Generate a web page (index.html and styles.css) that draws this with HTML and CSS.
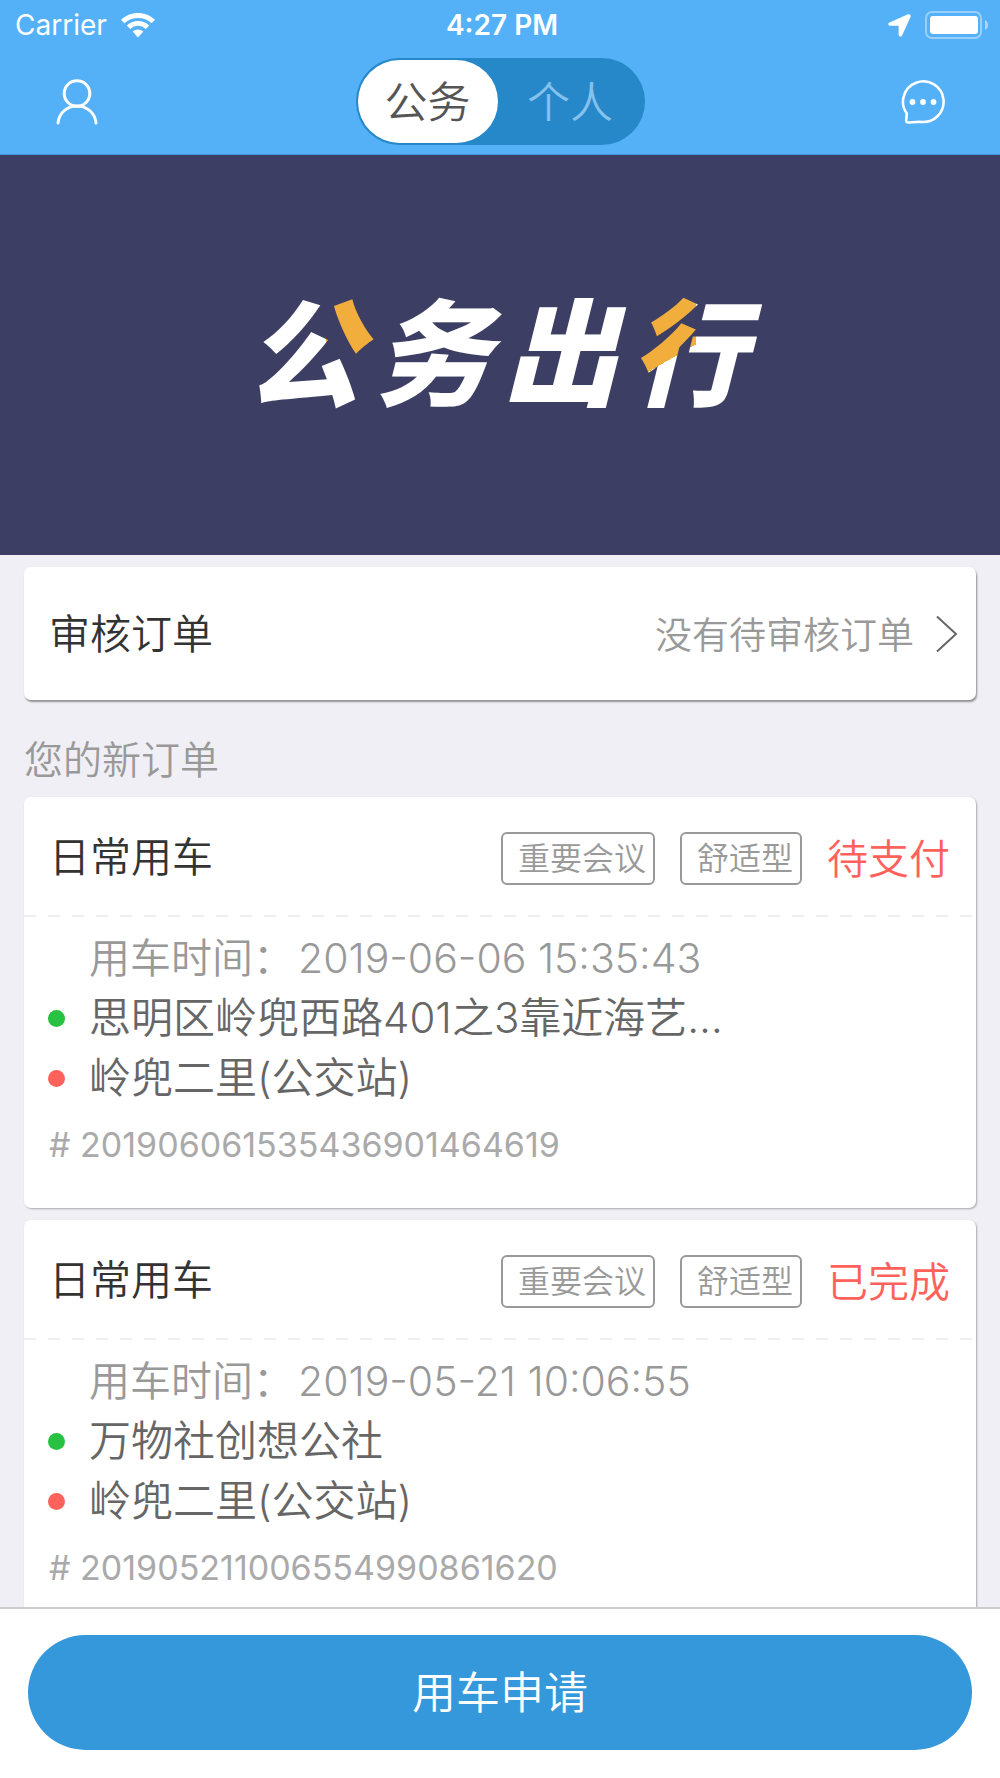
FILE: index.html
```html
<!DOCTYPE html>
<html lang="zh-CN">
<head>
    <meta charset="UTF-8">
    <meta name="viewport" content="width=device-width, initial-scale=1.0">
    <title>公务出行</title>
    <link rel="stylesheet" href="styles.css">
</head>
<body>
    <header class="header">
        <div class="status-bar">
            <div class="carrier">
                <span>Carrier</span>
                <svg width="34" height="25" viewBox="0 0 34 25" fill="#fff">
                    <path d="M17 0C10.500 0 4.600 2.500 0 6.700L3.400 10.300A20 20 0 0 1 30.600 10.300L34 6.700C29.400 2.500 23.500 0 17 0Z"/>
                    <path d="M17 8C12.700 8 8.800 9.600 5.800 12.400L9.200 15.900A11.500 11.500 0 0 1 24.800 15.900L28.200 12.400C25.200 9.600 21.300 8 17 8Z"/>
                    <path d="M17 16.500C15 16.500 13.200 17.200 11.700 18.500L17 24.500L22.300 18.500C20.800 17.200 19 16.500 17 16.500Z"/>
                </svg>
            </div>
            <strong class="time">4:27 PM</strong>
            <div class="battery">
                <svg width="23" height="23" viewBox="0 0 23 23" fill="#fff">
                    <path d="M20 .300L1.500 8.400C-.300 9.300 0 11.700 1.800 11.700H10.600V20.700C10.600 22.800 13.300 23.200 14.200 21.300L22.500 2.900C23.200 1.200 21.800-.400 20 .300Z"/>
                </svg>
                <svg width="64" height="28" viewBox="0 0 64 28">
                    <rect x="1" y="1" width="55" height="26" rx="6" fill="none" stroke="#fff" stroke-opacity=".4" stroke-width="2"/>
                    <rect x="5" y="5" width="48" height="18" rx="3" fill="#fff"/>
                    <path d="M60 9C62.200 10 63 12 63 14C63 16 62.200 18 60 19Z" fill="#fff" fill-opacity=".5"/>
                </svg>
            </div>
        </div>
        <nav class="nav">
            <button type="button" class="icon-btn" aria-label="个人中心">
                <svg width="44" height="46" viewBox="0 0 44 46" fill="none" stroke="#fff" stroke-width="3" stroke-linecap="round">
                    <circle cx="22" cy="14.500" r="12.800"/>
                    <path d="M3 44C4 34 12 27 22 27S40 34 41 44"/>
                </svg>
            </button>
            <div class="segment">
                <button type="button" class="segment-item active">公务</button>
                <button type="button" class="segment-item">个人</button>
            </div>
            <button type="button" class="icon-btn" aria-label="消息">
                <svg width="44" height="46" viewBox="0 0 44 46">
                    <path d="M5.800 34.500A20.300 20.300 0 1 1 19 42.700L7.500 43.500Q5 43.500 5.200 41Z" fill="none" stroke="#fff" stroke-width="2.600" stroke-linejoin="round"/>
                    <g fill="#fff">
                        <circle cx="11.500" cy="23" r="2.900"/>
                        <circle cx="22" cy="23" r="2.900"/>
                        <circle cx="32.500" cy="23" r="2.900"/>
                    </g>
                </svg>
            </button>
        </nav>
    </header>

    <main class="content">
        <h1 class="banner">
            <span class="gold-right">公</span><span>务</span><span>出</span><span class="gold-left">行</span>
        </h1>

        <a href="#" class="card review">
            <span class="card-title">审核订单</span>
            <span class="review-text">没有待审核订单</span>
            <svg width="22" height="38" viewBox="0 0 22 38" fill="none" stroke="#666" stroke-width="2">
                <path d="M1 1.500L20 19L1 36.500"/>
            </svg>
        </a>

        <h2 class="list-title">您的新订单</h2>

        <article class="card order">
            <div class="order-head">
                <h3 class="card-title">日常用车</h3>
                <span class="tag">重要会议</span>
                <span class="tag">舒适型</span>
                <span class="state">待支付</span>
            </div>
            <div class="order-body">
                <p class="row use-time"><span>用车时间：</span><time>2019-06-06 15:35:43</time></p>
                <p class="row from">思明区岭兜西路401之3靠近海艺…</p>
                <p class="row to">岭兜二里(公交站)</p>
                <p class="order-no"># 201906061535436901464619</p>
            </div>
        </article>

        <article class="card order">
            <div class="order-head">
                <h3 class="card-title">日常用车</h3>
                <span class="tag">重要会议</span>
                <span class="tag">舒适型</span>
                <span class="state">已完成</span>
            </div>
            <div class="order-body">
                <p class="row use-time"><span>用车时间：</span><time>2019-05-21 10:06:55</time></p>
                <p class="row from">万物社创想公社</p>
                <p class="row to">岭兜二里(公交站)</p>
                <p class="order-no"># 201905211006554990861620</p>
            </div>
        </article>
    </main>

    <footer class="footer">
        <button type="button" class="apply">用车申请</button>
    </footer>
</body>
</html>
```

FILE: styles.css
```css
* {
    box-sizing: border-box;
    margin: 0;
    padding: 0;
}
body {
    display: flex;
    flex-direction: column;
    height: 100vh;
    background: #f0eff5;
    color: #333;
    font-family: Inter, "Noto Sans CJK SC", sans-serif;
    font-weight: 350;
}
button {
    border: none;
    background: none;
    font: inherit;
    cursor: pointer;
}
svg {
    display: block;
}

/* header */
.header {
    flex: none;
    background: #54b1f8;
    border-bottom: 1px solid #4596d6;
    color: #fff;
}
.status-bar {
    display: grid;
    grid-template-columns: 1fr auto 1fr;
    align-items: center;
    height: 50px;
    padding: 0 11px 0 15px;
    font-size: 28px;
    font-weight: 400;
}
.carrier,
.battery {
    display: flex;
    align-items: center;
    gap: 14px;
}
.battery {
    justify-content: flex-end;
}
.time {
    font-weight: 600;
}
.nav {
    display: flex;
    justify-content: space-between;
    align-items: center;
    height: 104px;
    padding: 0 55px 1px;
}
.segment {
    display: grid;
    grid-template-columns: 140px 145px;
    height: 87px;
    padding: 2px;
    border-radius: 44px;
    background: #2687c9;
}
.segment-item {
    padding-bottom: 5px;
    border-radius: 42px;
    font-size: 43px;
    color: #84c1ec;
}
.segment-item.active {
    background: #fff;
    color: #555;
}

/* content */
.content {
    flex: 1;
    min-height: 0;
    overflow-y: auto;
    scrollbar-width: none;
}
.banner {
    display: flex;
    justify-content: center;
    align-items: center;
    gap: 12px;
    height: 400px;
    padding-right: 8px;
    background: #3d3e63;
    color: #fff;
    font-size: 116px;
    font-style: italic;
    font-weight: 900;
    line-height: 160px;
}
/* two-tone characters, the padding leaves room for the slant */
.gold-right,
.gold-left {
    margin-right: -16px;
    padding-right: 16px;
    background-color: #fff;
    background-repeat: no-repeat;
    -webkit-background-clip: text;
    background-clip: text;
    color: transparent;
}
.gold-right {
    background-image: linear-gradient(#f1ae3d, #f1ae3d);
    background-position: right top;
    background-size: 52px 84px;
}
.gold-left {
    background-image: linear-gradient(150deg, #f1ae3d 93px, #fff 93px);
    background-size: 66px 160px;
}
.card {
    margin: 12px 24px 0;
    border-radius: 7px;
    background: #fff;
    box-shadow: 1px 1px 2px rgba(0, 0, 0, 0.3);
}
.card-title {
    flex: 1;
    padding-bottom: 5px;
    color: #333;
    font-size: 41px;
    font-weight: 350;
}
.review {
    display: flex;
    align-items: center;
    height: 133px;
    padding: 0 18px 0 25px;
    box-shadow: 1px 2px 2px rgba(0, 0, 0, 0.4);
    text-decoration: none;
}
.review-text {
    margin-right: 22px;
    padding-bottom: 2px;
    color: #999;
    font-size: 37px;
}
.list-title {
    margin: 30px 24px 0;
    color: #999;
    font-size: 39px;
    font-weight: 350;
    line-height: 60px;
}
.list-title + .card {
    margin-top: 7px;
}

/* order */
.order-head {
    display: flex;
    align-items: center;
    height: 120px;
    padding: 3px 26px 0 25px;
    background: repeating-linear-gradient(90deg, #eee 0 12px, transparent 12px 24px) bottom / 100% 2px no-repeat;
}
.order-head .card-title {
    padding-bottom: 10px;
}
.tag {
    margin-right: 25px;
    padding: 0 7px 0 15px;
    border: 2px solid #999;
    border-radius: 6px;
    color: #999;
    font-size: 32px;
    line-height: 49px;
}
.state {
    padding-bottom: 5px;
    color: #ff615b;
    font-size: 41px;
}
.order-body {
    padding: 10px 25px 38px;
}
.row {
    display: flex;
    align-items: center;
    height: 60px;
    padding: 2px 0 0 40px;
    color: #666;
    font-size: 42px;
    line-height: 60px;
}
.use-time {
    color: #999;
    font-size: 41px;
}
.use-time time {
    padding-left: 4px;
}
.from::before,
.to::before {
    content: "";
    width: 17px;
    height: 17px;
    margin: 0 24px 0 -41px;
    border-radius: 50%;
    background: #29c142;
}
.to::before {
    background: #ff615b;
}
.order-no {
    margin-top: 13px;
    color: #aaa;
    font-size: 34px;
    font-weight: 400;
    line-height: 50px;
}

/* footer */
.footer {
    flex: none;
    padding: 26px 28px 28px;
    border-top: 2px solid #ccc;
    background: #fff;
}
.apply {
    width: 100%;
    height: 115px;
    padding-bottom: 6px;
    border-radius: 58px;
    background: #3598db;
    color: #fff;
    font-size: 44px;
}
```
